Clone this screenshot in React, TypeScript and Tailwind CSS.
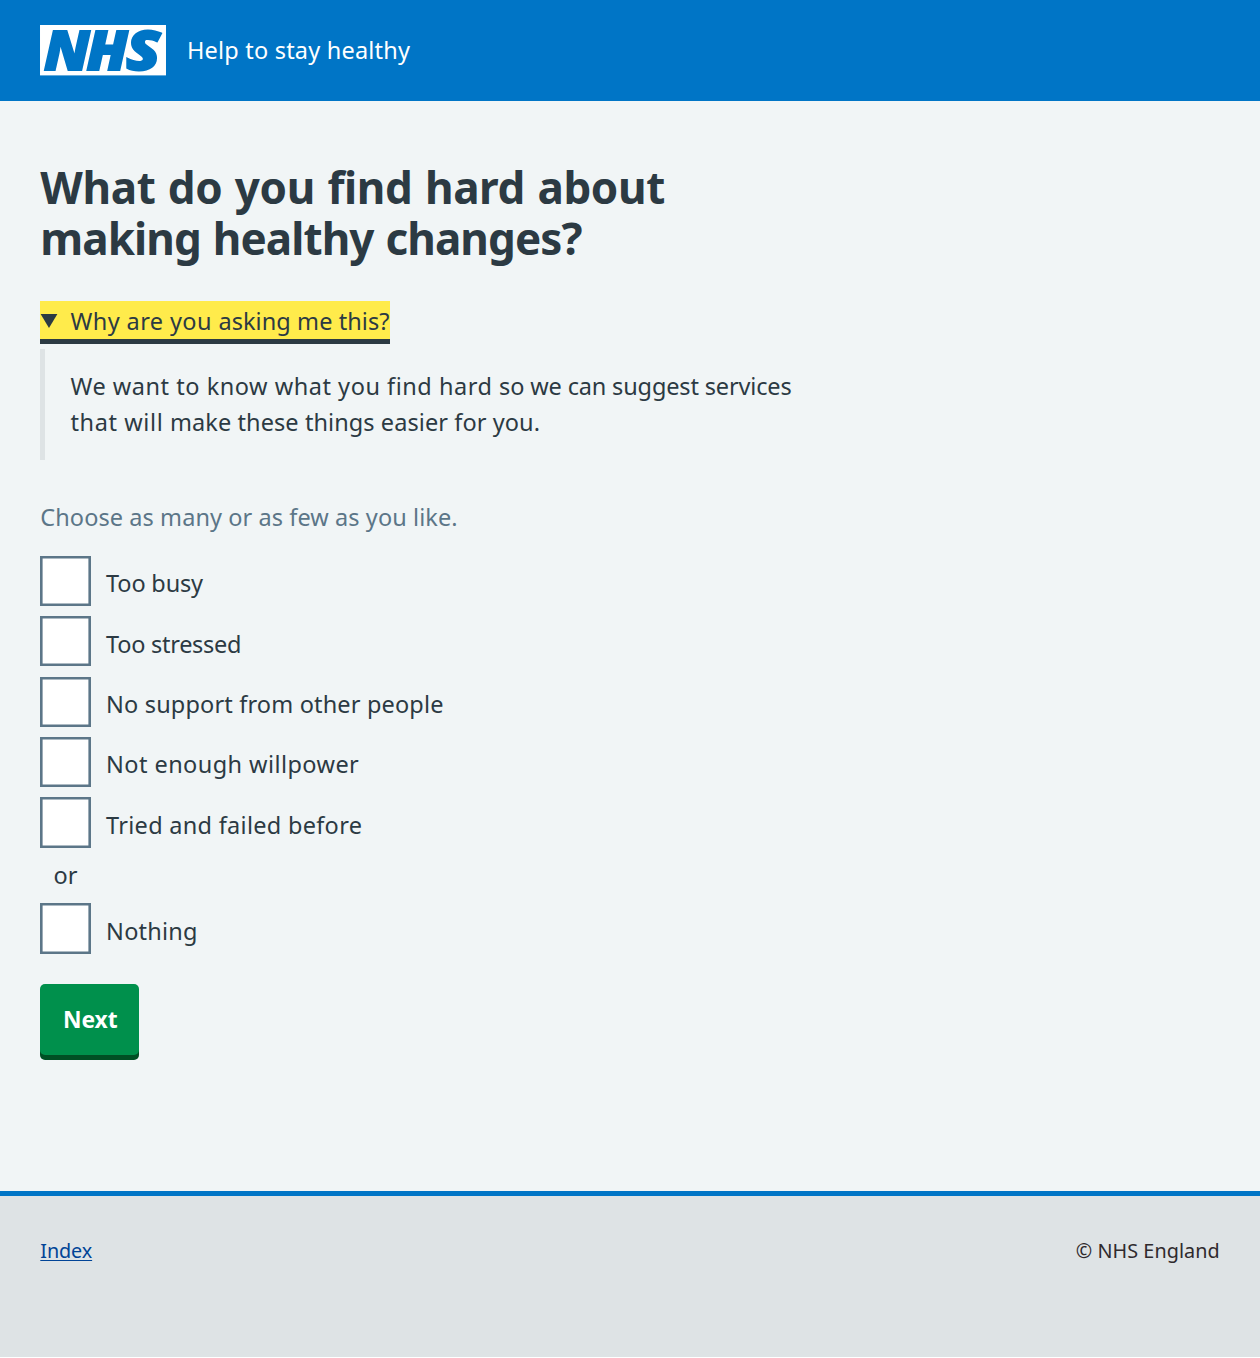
import React from 'react';

type Option = { label: string; tracking: string };

const options: Option[] = [
  { label: 'Too busy', tracking: '-tracking-[0.17px]' },
  { label: 'Too stressed', tracking: '-tracking-[0.27px]' },
  { label: 'No support from other people', tracking: 'tracking-[0.16px]' },
  { label: 'Not enough willpower', tracking: 'tracking-[0.43px]' },
  { label: 'Tried and failed before', tracking: 'tracking-[0.29px]' },
];

const logoLetters = [
  { letter: 'N', transform: 'translate(4 45.2) scale(1.05 1)' },
  { letter: 'H', transform: 'translate(46.6 45.2) scale(1.05 1)' },
  { letter: 'S', transform: 'translate(86 45.2) scale(1.14 1)' },
];

function NhsLogo() {
  return (
    <svg className="block h-[50.4px] w-[126px] overflow-visible" viewBox="0 0 126 50.4" role="img" aria-label="NHS">
      <rect width="126" height="50.4" fill="#fff" />
      {logoLetters.map(({ letter, transform }) => (
        <text
          key={letter}
          transform={transform}
          fontFamily="'Open Sans', sans-serif"
          fontStyle="italic"
          fontWeight="800"
          fontSize="55.2"
          strokeWidth="1.8"
          className="fill-[#0075c6] stroke-[#0075c6]"
        >
          {letter}
        </text>
      ))}
    </svg>
  );
}

function Checkbox({ label, tracking }: Option) {
  return (
    <label className="flex h-[50.4px] gap-[15.4px]">
      <input
        type="checkbox"
        className="size-[50.4px] shrink-0 appearance-none bg-white shadow-[inset_0_0_0_2.6px_#5c7688]"
      />
      <span className={`pt-[9.5px] ${tracking}`}>{label}</span>
    </label>
  );
}

export default function App() {
  return (
    <div className="flex h-[1357px] flex-col bg-[#f1f5f6] font-['Noto_Sans',sans-serif] text-[23.5px] leading-9 text-[#2c3a43]">
      <header className="flex h-[100.8px] shrink-0 items-center gap-[21px] bg-[#0075c6] px-10">
        <NhsLogo />
        <span className="tracking-[0.2px] text-white">Help to stay healthy</span>
      </header>

      <main className="flex grow flex-col items-start px-[40.3px] pt-[61px]">
        <h1 className="text-[44px] leading-[51px] font-bold">
          <span className="block tracking-[-0.38px] [word-spacing:1.4px]">What do you find hard about</span>
          <span className="block tracking-[-0.92px] [word-spacing:1.4px]">making healthy changes?</span>
        </h1>

        <section className="mt-[37.2px] flex flex-col items-start">
          <button className="flex h-[43px] w-[350px] border-b-[5px] border-[#2c3a43] bg-[#ffeb4b] pt-[2px] whitespace-nowrap">
            <svg className="mt-[11px] mr-[12.7px] h-[14px] w-[17.5px] shrink-0" viewBox="0 0 17.5 14" fill="currentColor">
              <path d="M0.6 0H17.4L9 14Z" />
            </svg>
            <span>
              <span className="tracking-[0.4px]">Why are you </span>
              <span className="tracking-[0.08px]">asking me this?</span>
            </span>
          </button>
          <p className="mt-[5px] h-[111px] border-l-[5px] border-[#dee3e5] pt-[20.5px] pl-[25.2px] leading-[35.3px]">
            <span className="tracking-[0.53px]">We want to know what you find hard </span>
            <span className="tracking-[-0.15px]">so we can suggest services</span>
            <br />
            <span className="tracking-[0.6px]">that will </span>
            <span className="tracking-[0.08px]">make these things easier for you.</span>
          </p>
        </section>

        <p className="mt-[39px] tracking-[0.08px] text-[#5c7688]">Choose as many or as few as you like.</p>

        <div className="mt-[20.6px] flex flex-col gap-[10.08px]">
          {options.map((option) => (
            <Checkbox key={option.label} {...option} />
          ))}
        </div>
        <div className="mt-[9.3px] mb-[10.3px] w-[50.4px] text-center">or</div>
        <Checkbox label="Nothing" tracking="tracking-[0.2px]" />

        <button className="mt-[30px] h-[71px] w-[98.5px] rounded-[5px] bg-[#00904c] pt-[1.5px] pl-[1.5px] text-[22.8px] font-bold tracking-[-0.1px] text-white shadow-[0_5px_0_#004f24]">
          Next
        </button>
      </main>

      <footer className="flex h-[166.4px] shrink-0 justify-between border-t-[5px] border-[#0075c6] bg-[#dee3e5] px-[40.3px] pt-[37.5px] text-[19.8px]">
        <a href="#index" className="h-9 tracking-[-0.1px] text-[#004497] underline decoration-[1.3px] underline-offset-[2px]">
          Index
        </a>
        <span className="tracking-[0.05px] text-[#2f2a2d]">© NHS England</span>
      </footer>
    </div>
  );
}
